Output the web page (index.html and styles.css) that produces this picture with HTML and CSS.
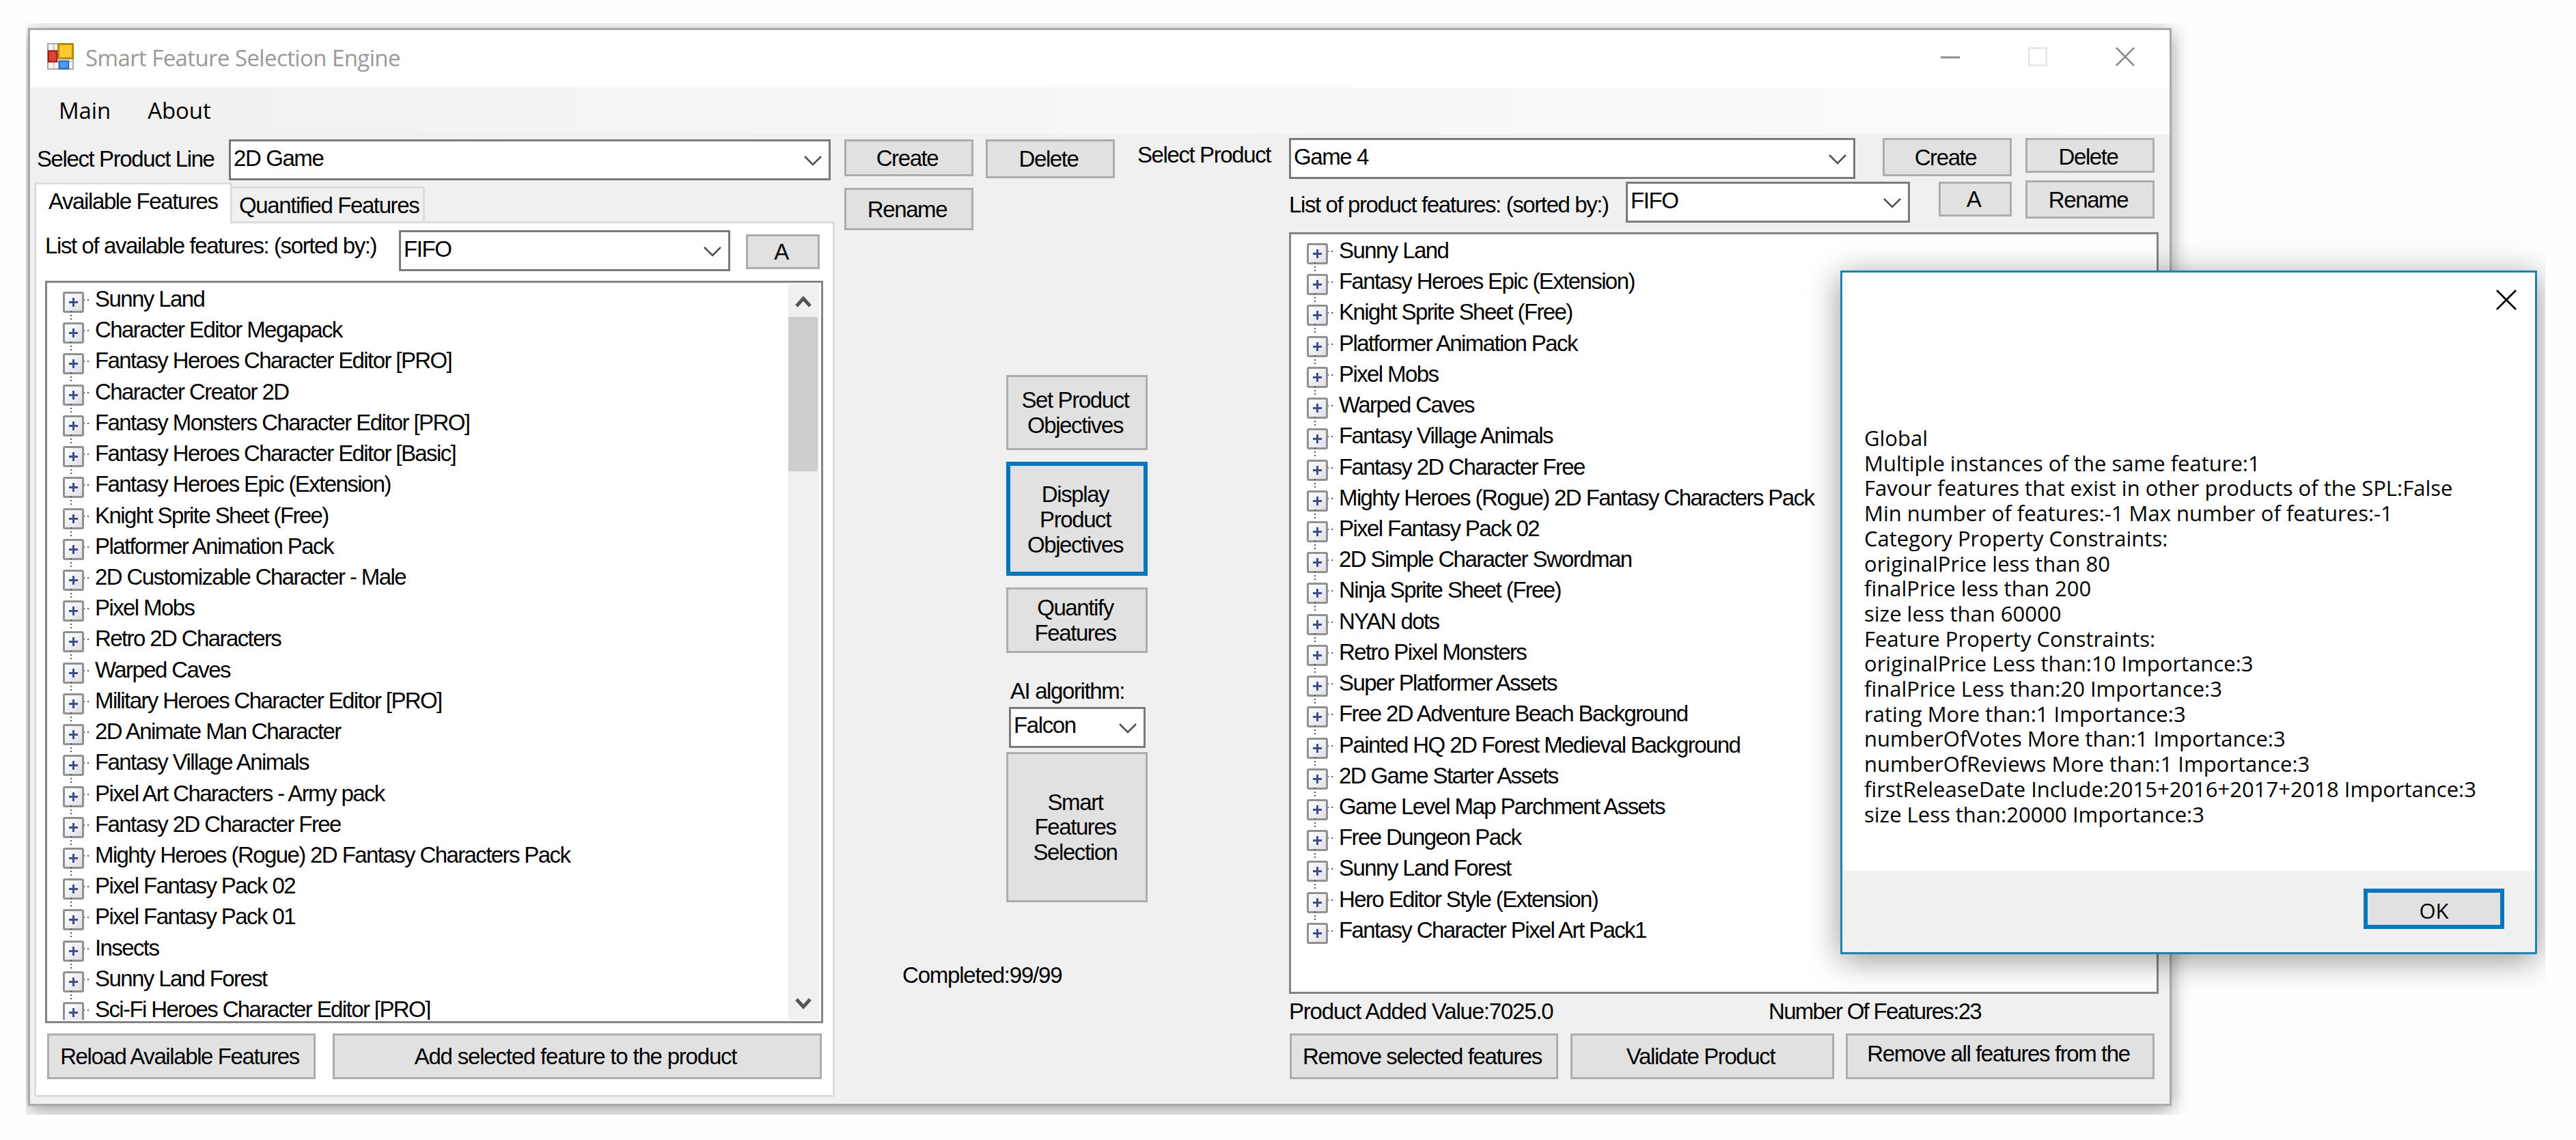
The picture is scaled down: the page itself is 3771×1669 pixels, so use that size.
FILE: index.html
```html
<!DOCTYPE html>
<html lang="en">
  <head>
    <meta charset="UTF-8" />
    <title>Smart Feature Selection Engine</title>
    <link rel="stylesheet" href="styles.css">
  </head>
  <body>
    <svg class="sprite" width="0" height="0">
      <symbol id="chevron" viewBox="0 0 28 16">
        <path d="M2 2 L14 14 L26 2" fill="none" stroke="#505050" stroke-width="2.6" />
      </symbol>
      <symbol id="cross" viewBox="0 0 30 30">
        <path d="M1 1 L29 29 M29 1 L1 29" fill="none" stroke="currentColor" stroke-width="2.6" />
      </symbol>
    </svg>

    <div class="desktop">
      <div class="window">
        <header class="titlebar">
          <svg class="app-icon" viewBox="0 0 40 40">
            <rect x="1" y="1" width="38" height="38" fill="#f4f4f4" stroke="#a8a8a8" stroke-width="2" />
            <path d="M10 1 V39 M1 28 H39" stroke="#b8b8b8" stroke-width="1.5" />
            <rect x="17" y="1.5" width="21.5" height="21.5" fill="#fcc82e" stroke="#b8860b" stroke-width="3" />
            <rect x="2" y="12" width="12.5" height="16" fill="#e0413a" stroke="#a8201c" stroke-width="2.5" />
            <rect x="18" y="27" width="14" height="11.5" fill="#4f9ae8" stroke="#2266bb" stroke-width="2" />
          </svg>
          <span class="title">Smart Feature Selection Engine</span>
          <div class="window-buttons">
            <svg class="minimize" viewBox="0 0 28 28"><path d="M0 15 H28" stroke="#8c8c8c" stroke-width="3" /></svg>
            <svg class="maximize" viewBox="0 0 28 28"><rect x="1.3" y="1.3" width="25.4" height="25.4" fill="none" stroke="#e6e6e6" stroke-width="2.6" /></svg>
            <svg class="close"><use href="#cross" /></svg>
          </div>
        </header>

        <nav class="menubar">
          <span>Main</span>
          <span>About</span>
        </nav>

        <main class="content">
          <section class="left">
            <div class="line-row">
              <label>Select Product Line</label>
              <div class="select line-select">2D Game <svg><use href="#chevron" /></svg></div>
            </div>

            <div class="tabs">
              <div class="tab active">Available Features</div>
              <div class="tab">Quantified Features</div>
            </div>

            <div class="tab-page">
              <div class="sort-row">
                <label>List of available features: (sorted by:)</label>
                <div class="select">FIFO <svg><use href="#chevron" /></svg></div>
                <button>A</button>
              </div>

              <div class="tree available">
                <ul>
                  <li>Sunny Land</li>
                  <li>Character Editor Megapack</li>
                  <li>Fantasy Heroes Character Editor [PRO]</li>
                  <li>Character Creator 2D</li>
                  <li>Fantasy Monsters Character Editor [PRO]</li>
                  <li>Fantasy Heroes Character Editor [Basic]</li>
                  <li>Fantasy Heroes Epic (Extension)</li>
                  <li>Knight Sprite Sheet (Free)</li>
                  <li>Platformer Animation Pack</li>
                  <li>2D Customizable Character - Male</li>
                  <li>Pixel Mobs</li>
                  <li>Retro 2D Characters</li>
                  <li>Warped Caves</li>
                  <li>Military Heroes Character Editor [PRO]</li>
                  <li>2D Animate Man Character</li>
                  <li>Fantasy Village Animals</li>
                  <li>Pixel Art Characters - Army pack</li>
                  <li>Fantasy 2D Character Free</li>
                  <li>Mighty Heroes (Rogue) 2D Fantasy Characters Pack</li>
                  <li>Pixel Fantasy Pack 02</li>
                  <li>Pixel Fantasy Pack 01</li>
                  <li>Insects</li>
                  <li>Sunny Land Forest</li>
                  <li>Sci-Fi Heroes Character Editor [PRO]</li>
                </ul>
                <div class="scrollbar">
                  <svg viewBox="0 0 24 18"><path d="M2 16 L12 5 L22 16" fill="none" stroke="#555" stroke-width="5" /></svg>
                  <div class="thumb"></div>
                  <svg viewBox="0 0 24 18"><path d="M2 2 L12 13 L22 2" fill="none" stroke="#555" stroke-width="5" /></svg>
                </div>
              </div>

              <div class="actions">
                <button class="reload">Reload Available Features</button>
                <button class="add">Add selected feature to the product</button>
              </div>
            </div>
          </section>

          <section class="center">
            <div class="line-buttons">
              <button class="create">Create</button>
              <button class="delete">Delete</button>
              <label>Select Product</label>
              <button class="rename">Rename</button>
            </div>

            <div class="steps">
              <button class="set">Set Product<br />Objectives</button>
              <button class="display focused">Display<br />Product<br />Objectives</button>
              <button class="quantify">Quantify<br />Features</button>
              <label>AI algorithm:</label>
              <div class="select">Falcon <svg><use href="#chevron" /></svg></div>
              <button class="smart">Smart<br />Features<br />Selection</button>
            </div>

            <p class="progress">Completed:99/99</p>
          </section>

          <section class="right">
            <div class="product-row">
              <div class="select">Game 4 <svg><use href="#chevron" /></svg></div>
              <button class="create">Create</button>
              <button class="delete">Delete</button>
            </div>
            <div class="sort-row">
              <label>List of product features: (sorted by:)</label>
              <div class="select">FIFO <svg><use href="#chevron" /></svg></div>
              <button class="order">A</button>
              <button class="rename">Rename</button>
            </div>

            <div class="tree">
              <ul>
                <li>Sunny Land</li>
                <li>Fantasy Heroes Epic (Extension)</li>
                <li>Knight Sprite Sheet (Free)</li>
                <li>Platformer Animation Pack</li>
                <li>Pixel Mobs</li>
                <li>Warped Caves</li>
                <li>Fantasy Village Animals</li>
                <li>Fantasy 2D Character Free</li>
                <li>Mighty Heroes (Rogue) 2D Fantasy Characters Pack</li>
                <li>Pixel Fantasy Pack 02</li>
                <li>2D Simple Character Swordman</li>
                <li>Ninja Sprite Sheet (Free)</li>
                <li>NYAN dots</li>
                <li>Retro Pixel Monsters</li>
                <li>Super Platformer Assets</li>
                <li>Free 2D Adventure Beach Background</li>
                <li>Painted HQ 2D Forest Medieval Background</li>
                <li>2D Game Starter Assets</li>
                <li>Game Level Map Parchment Assets</li>
                <li>Free Dungeon Pack</li>
                <li>Sunny Land Forest</li>
                <li>Hero Editor Style (Extension)</li>
                <li>Fantasy Character Pixel Art Pack1</li>
              </ul>
            </div>

            <div class="stats">
              <span>Product Added Value:7025.0</span>
              <span>Number Of Features:23</span>
            </div>
            <div class="actions">
              <button class="remove">Remove selected features</button>
              <button class="validate">Validate Product</button>
              <button class="remove-all">Remove all features from the</button>
            </div>
          </section>
        </main>
      </div>

      <div class="dialog">
        <svg class="close"><use href="#cross" /></svg>
        <div class="message">Global
Multiple instances of the same feature:1
Favour features that exist in other products of the SPL:False
Min number of features:-1 Max number of features:-1
Category Property Constraints:
originalPrice less than 80
finalPrice less than 200
size less than 60000
Feature Property Constraints:
originalPrice Less than:10 Importance:3
finalPrice Less than:20 Importance:3
rating More than:1 Importance:3
numberOfVotes More than:1 Importance:3
numberOfReviews More than:1 Importance:3
firstReleaseDate Include:2015+2016+2017+2018 Importance:3
size Less than:20000 Importance:3</div>
        <footer>
          <button class="focused">OK</button>
        </footer>
      </div>
    </div>
  </body>
</html>
```
FILE: styles.css
```css
* {
  box-sizing: border-box;
}

body {
  margin: 0;
  padding: 34px 0 0 38px;
  width: 3771px;
  height: 1669px;
  overflow: hidden;
  background-color: #fefefe;
  color: #000;
  font-family: "Liberation Sans", Arial, sans-serif;
  font-size: 33px;
  line-height: 36.7px;
  letter-spacing: -1.4px;
  white-space: nowrap;
}

.sprite {
  position: absolute;
}

.desktop {
  position: relative;
  width: 3688px;
  height: 1598px;
  padding: 7px 0 0 3px;
  overflow: hidden;
}

.window {
  width: 3138px;
  height: 1578px;
  border: 3px solid #a9a9a9;
  background-color: #f0f0f0;
  box-shadow: 0 6px 26px rgba(0, 0, 0, 0.4);
}

/* Title bar and menu */
.titlebar {
  display: flex;
  height: 84px;
  padding-left: 25px;
  background-color: #fff;
  color: #999;
}

.app-icon {
  width: 39px;
  height: 39px;
  margin-top: 19px;
}

.title,
.menubar,
.dialog {
  font-family: "Open Sans", "Noto Sans", sans-serif;
}

.title {
  margin: 23px 0 0 17px;
  font-size: 33px;
  letter-spacing: -0.6px;
}

.window-buttons {
  display: flex;
  gap: 100px;
  margin: 25px 51px 0 auto;
}

.window-buttons svg {
  width: 28px;
  height: 28px;
}

.close {
  width: 30px;
  height: 30px;
}

.window-buttons .close {
  color: #858585;
}

.menubar {
  display: flex;
  gap: 54px;
  height: 68px;
  padding: 16px 0 0 42px;
  background: linear-gradient(to right, #f0f0f0, #fcfcfc);
  letter-spacing: -0.1px;
}

.content {
  display: flex;
  height: 1420px;
}

/* Shared controls */
button {
  display: flex;
  align-items: center;
  justify-content: center;
  padding: 2px 5px 0 0;
  border: 3px solid #adadad;
  background-color: #e1e1e1;
  color: #000;
  font: inherit;
  letter-spacing: inherit;
  text-align: center;
}

button.focused {
  border: 6px solid #0076bd;
}

.select {
  display: flex;
  align-items: center;
  justify-content: space-between;
  height: 60px;
  padding: 0 9px 4px 4px;
  border: 3px solid #7a7a7a;
  background-color: #fff;
}

.select svg {
  width: 28px;
  height: 16px;
  margin-top: 6px;
}

.tree {
  display: flex;
  justify-content: space-between;
  border: 3px solid #828487;
  background-color: #fff;
  letter-spacing: -1.6px;
}

.tree ul {
  flex: 1;
  margin: 4px 0 0;
  padding: 0;
  list-style: none;
}

.tree li {
  position: relative;
  height: 45.22px;
  padding-left: 70px;
  line-height: 40px;
  background: repeating-linear-gradient(to right, #555 0 2px, transparent 2px 6px) 53px 20px / 8px 2px no-repeat;
}

/* expander box with its plus sign */
.tree li::before {
  content: "";
  position: absolute;
  left: 23px;
  top: 9px;
  width: 25px;
  height: 25px;
  border: 3px solid #919191;
  border-radius: 3px;
  background:
    linear-gradient(#3f4d8c, #3f4d8c) center / 13px 3px no-repeat,
    linear-gradient(#3f4d8c, #3f4d8c) center / 3px 13px no-repeat,
    linear-gradient(135deg, #fff, #dcdfe6);
}

/* dotted line down to the next node */
.tree li:not(:last-child)::after {
  content: "";
  position: absolute;
  left: 34px;
  top: 37px;
  width: 2px;
  height: 14px;
  background: repeating-linear-gradient(#555 0 2px, transparent 2px 5.7px);
}

.actions {
  display: flex;
}

.actions button {
  height: 67px;
}

/* Left column */
.left {
  width: 1192px;
  padding: 8px 0 0 6px;
}

.line-row {
  display: flex;
  height: 63px;
}

.line-row label {
  width: 285px;
  padding: 11px 0 0 4px;
}

.line-select {
  width: 881px;
}

.tabs {
  display: flex;
  align-items: flex-end;
  height: 57px;
}

.tab {
  width: 282px;
  height: 51px;
  padding: 7px 0 0 10px;
  border: 3px solid #dcdcdc;
  border-width: 3px 3px 0 0;
}

.tab.active {
  width: 290px;
  height: 60px;
  margin-bottom: -3px;
  padding: 7px 0 0 18px;
  border-left-width: 3px;
  background-color: #fff;
  z-index: 1;
}

.tab-page {
  width: 1172px;
  height: 1282px;
  padding: 10px 0 0 13px;
  border: 3px solid #dcdcdc;
  background-color: #fff;
}

.left .sort-row {
  display: flex;
  height: 74px;
}

.left .sort-row label {
  width: 518px;
  padding-top: 5px;
}

.left .sort-row .select {
  width: 485px;
}

.left .sort-row button {
  width: 108px;
  height: 51px;
  margin: 6px 0 0 23px;
}

.available {
  width: 1139px;
  height: 1087px;
}

.available ul {
  height: 1075px;
  overflow: hidden;
}

.scrollbar {
  display: flex;
  flex-direction: column;
  align-items: center;
  width: 45px;
  height: 1077px;
  margin: 2px 3px 0 0;
  padding: 15px 2px 13px 0;
  background-color: #f0f0f0;
}

.scrollbar svg {
  width: 24px;
  height: 20px;
}

.thumb {
  width: 43px;
  height: 226px;
  margin: 13px 0 auto;
  background-color: #cdcdcd;
}

.left .actions {
  margin: 15px 0 0 3px;
}

.reload {
  width: 393px;
  margin-right: 25px;
}

.add {
  width: 716px;
  letter-spacing: -1.2px;
}

/* Center column */
.center {
  width: 651px;
  padding-top: 8px;
}

.line-buttons {
  display: grid;
  grid-template-columns: 189px 189px auto;
  grid-template-rows: 71px 62px;
  column-gap: 18px;
  height: 133px;
}

.create {
  width: 189px;
  height: 54px;
}

.center .delete {
  height: 57px;
}

.line-buttons label {
  padding: 5px 0 0 15px;
}

.steps {
  display: flex;
  flex-direction: column;
  width: 207px;
  margin: 212px 0 0 237px;
}

.set {
  height: 110px;
}

.display {
  height: 167px;
  margin: 17px 0;
  padding-top: 4px;
}

.quantify {
  height: 96px;
}

.steps label {
  margin: 38px 0 4px 6px;
}

.steps .select {
  width: 200px;
  margin: 0 0 6px 4px;
}

.smart {
  height: 220px;
}

.progress {
  margin: 89px 0 0 85px;
  letter-spacing: -1.2px;
}

/* Right column */
.right {
  padding-top: 6px;
}

.product-row {
  display: flex;
  height: 62px;
}

.product-row .select {
  width: 829px;
  margin-right: 40px;
}

.product-row .create {
  height: 56px;
  margin-right: 20px;
}

.product-row .delete {
  width: 189px;
  height: 51px;
  padding-top: 5px;
}

.right .sort-row {
  display: flex;
  height: 76px;
}

.right .sort-row label {
  width: 493px;
  padding-top: 18px;
}

.right .sort-row .select {
  width: 416px;
  margin-top: 2px;
}

.order {
  width: 107px;
  height: 51px;
  margin: 2px 20px 0 42px;
}

.right .sort-row .rename {
  width: 189px;
  height: 56px;
}

.right .tree {
  width: 1273px;
  height: 1115px;
}

.stats {
  display: flex;
  height: 58px;
  padding-top: 8px;
}

.stats span:first-child {
  width: 702px;
  letter-spacing: -1.2px;
}

.stats span:last-child {
  letter-spacing: -1.7px;
}

.remove {
  width: 393px;
  margin: 0 18px 0 1px;
}

.validate {
  width: 386px;
  margin-right: 17px;
}

.remove-all {
  width: 452px;
  padding-bottom: 9px;
}

/* Message box */
.dialog {
  position: absolute;
  left: 2656px;
  top: 362px;
  display: flex;
  flex-direction: column;
  width: 1020px;
  height: 1001px;
  border: 3px solid #1f81ad;
  background-color: #fff;
  box-shadow: 0 8px 44px rgba(0, 0, 0, 0.42);
  font-size: 31px;
  letter-spacing: 0;
}

.dialog .close {
  flex: none;
  align-self: flex-end;
  margin: 25px 27px 0 0;
}

.message {
  margin: 169px 0 0 32px;
  white-space: pre;
}

.dialog footer {
  display: flex;
  justify-content: flex-end;
  height: 119px;
  margin-top: auto;
  padding: 26px 45px 0 0;
  background-color: #f0f0f0;
}

.dialog button {
  width: 206px;
  height: 59px;
  padding: 6px 0 0;
}
```
